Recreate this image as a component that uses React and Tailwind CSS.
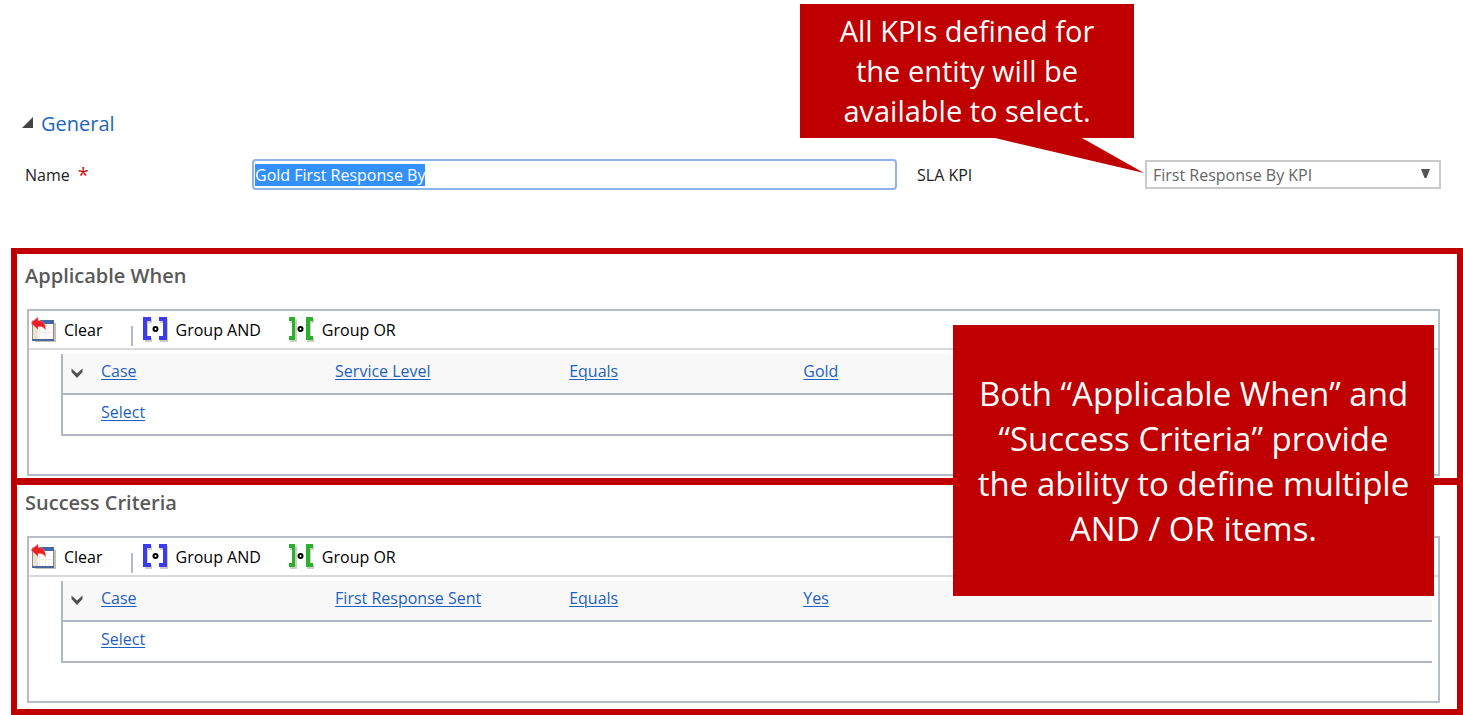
import { useEffect, useRef } from "react";

function ClearIcon() {
  return (
    <svg width="25" height="25" viewBox="0 0 25 25" aria-hidden="true">
      <path d="M4 24H24V6" fill="none" stroke="#c4c0b8" strokeWidth="2" />
      <rect x="1.5" y="4" width="21" height="19" fill="#fdfcfa" stroke="#8f8a80" />
      <rect x="2" y="9" width="5" height="13" fill="#e6e3d3" />
      <path d="M8.500 9v13M14.500 11v11M8 15.500h14" stroke="#f1eeea" />
      <rect x="9" y="3" width="14" height="4" fill="#4467a5" />
      <rect x="1" y="22" width="22" height="2" fill="#4a6899" />
      <path d="M0 6L7 0V3.500C12 3.500 15 7 14.500 13C12.500 9.800 10.500 9.300 7 9.500V12.500Z" fill="#ee1c24" stroke="#ff8c8c" strokeWidth="0.500" />
    </svg>
  );
}

function GroupAndIcon() {
  return (
    <svg width="25" height="25" viewBox="0 0 25 25" aria-hidden="true">
      <path d="M2 2H9V6H5V21H9V25H2ZM25 2H17V6H21V21H17V25H25Z" fill="#cfccc4" />
      <path d="M0 0H8V4H4V19H8V23H0ZM24 0H16V4H20V19H16V23H24Z" fill="#3b3bf0" />
      <circle cx="12.500" cy="12" r="2" fill="#fff" stroke="#000" strokeWidth="2" />
    </svg>
  );
}

function GroupOrIcon() {
  return (
    <svg width="25" height="25" viewBox="0 0 25 25" aria-hidden="true">
      <path d="M1 2H8V25H1V21H4V6H1ZM25 2H18V25H25V21H22V6H25Z" fill="#cfccc4" />
      <path d="M0 0H6V23H0V19H3V4H0ZM24 0H17V23H24V19H21V4H24Z" fill="#2bb02b" />
      <circle cx="11.500" cy="12" r="2" fill="#fff" stroke="#000" strokeWidth="2" />
    </svg>
  );
}

function ChevronIcon() {
  return (
    <svg width="12" height="10" viewBox="0 0 12 10" aria-hidden="true">
      <path d="M0.500 0.500L6 5.500L11.500 0.500V4L6 10L0.500 4Z" fill="#505050" />
    </svg>
  );
}

function FilterLink({ children }) {
  return (
    <a href="#" className="text-[#1f5fbf] underline decoration-1 underline-offset-2">
      {children}
    </a>
  );
}

function ConditionPanel({ field, value }) {
  return (
    <div className="mt-[19px] mr-[17px] ml-[10px] border-2 border-[#b7bdc8] pb-[38px]">
      <div className="flex h-[39px] items-center border-b-2 border-[#d9d9d9] pl-[2px] text-black">
        <button type="button" className="flex items-center gap-2">
          <ClearIcon />
          Clear
        </button>
        <span className="mt-3 ml-7 h-5 w-[2px] bg-[#b4bac4]" />
        <button type="button" className="ml-[10px] flex items-center gap-2">
          <GroupAndIcon />
          Group AND
        </button>
        <button type="button" className="ml-7 flex items-center gap-2">
          <GroupOrIcon />
          Group OR
        </button>
      </div>
      <div className="mt-1 mr-[6px] ml-8 border-l-2 border-[#b0b7c2]">
        <table className="w-full table-fixed border-separate border-spacing-0 text-left">
          <colgroup>
            <col className="w-[38px]" />
            <col className="w-[17.1%]" />
            <col className="w-[17.1%]" />
            <col className="w-[17.1%]" />
            <col />
          </colgroup>
          <tbody>
            <tr className="h-[41px] bg-[#f8f8f8] [&>td]:border-b-2 [&>td]:border-[#b0b7c2] [&>td]:pb-[6px]">
              <td>
                <button type="button" aria-label="Row options" className="mt-1 ml-2 flex">
                  <ChevronIcon />
                </button>
              </td>
              <td><FilterLink>Case</FilterLink></td>
              <td><FilterLink>{field}</FilterLink></td>
              <td><FilterLink>Equals</FilterLink></td>
              <td><FilterLink>{value}</FilterLink></td>
            </tr>
            <tr className="h-[41px] [&>td]:border-b-2 [&>td]:border-[#b0b7c2] [&>td]:pb-[6px]">
              <td />
              <td colSpan={4}><FilterLink>Select</FilterLink></td>
            </tr>
          </tbody>
        </table>
      </div>
    </div>
  );
}

export default function App() {
  const nameRef = useRef(null);
  useEffect(() => {
    nameRef.current.focus();
    nameRef.current.select();
  }, []);

  return (
    <main className="bg-white pt-[109px] font-['Open_Sans',sans-serif] text-[16px] leading-6 text-[#222]">
      <h2 className="pl-[22px] text-[20px] leading-[30px] text-[#2266bb]">
        <button type="button" className="flex items-center gap-2">
          <svg width="11" height="11" viewBox="0 0 11 11" className="mb-1" aria-hidden="true">
            <path d="M11 0V11H0Z" fill="#444" />
          </svg>
          General
        </button>
      </h2>

      <div className="mt-5 grid grid-cols-[227fr_665fr_228fr_296fr] items-center pr-[22px] pl-[25px]">
        <label htmlFor="name" className="flex gap-2">
          Name <span className="text-[20px] text-[#d01010]">*</span>
        </label>
        <input
          id="name"
          ref={nameRef}
          defaultValue="Gold First Response By"
          className="mr-5 h-[31px] rounded-sm border-2 border-[#8db2ee] px-px leading-6 outline-none selection:bg-[#3390ff] selection:text-white"
        />
        <label htmlFor="kpi">SLA KPI</label>
        <div className="relative">
          <select
            id="kpi"
            className="block h-[29px] w-full appearance-none border-2 border-[#cacaca] bg-white pl-[6px] leading-6 text-[#666] outline-none"
          >
            <option>First Response By KPI</option>
          </select>
          <svg width="9" height="9" viewBox="0 0 9 9" className="pointer-events-none absolute top-[9px] right-[11px]" aria-hidden="true">
            <path d="M0 0H9L5.500 9H3.500Z" fill="#555" />
          </svg>
          <aside className="absolute right-[307px] bottom-[51px] z-10 flex h-[134px] w-[334px] items-center justify-center bg-[#c00000] text-center font-['Open_Sans',sans-serif] text-[29px] leading-10 text-white">
            <p>
              All KPIs defined for
              <br />
              the entity will be
              <br />
              available to select.
            </p>
            <svg width="149" height="36" viewBox="0 0 149 36" className="absolute top-full left-[195px]" aria-hidden="true">
              <path d="M0 0H87L149 35Z" fill="#c00000" />
            </svg>
          </aside>
        </div>
      </div>

      <div className="relative mt-[58px] ml-[11px] border-6 border-[#c00000]">
        <section className="pt-2 pb-[2px]">
          <h3 className="pl-2 text-[20px] leading-7 font-semibold text-[#5a5a5a]">Applicable When</h3>
          <ConditionPanel field="Service Level" value="Gold" />
        </section>
        <section className="border-t-7 border-[#c00000] pt-1 pb-[6px]">
          <h3 className="pl-2 text-[20px] leading-7 font-semibold text-[#5a5a5a]">Success Criteria</h3>
          <ConditionPanel field="First Response Sent" value="Yes" />
        </section>
        <aside className="absolute top-[71px] right-[23px] flex h-[271px] w-[481px] items-center justify-center bg-[#c00000] text-center font-['Open_Sans',sans-serif] text-[33px] leading-[45px] text-white">
          <p>
            Both “Applicable When” and
            <br />
            “Success Criteria” provide
            <br />
            the ability to define multiple
            <br />
            AND / OR items.
          </p>
        </aside>
      </div>
    </main>
  );
}
